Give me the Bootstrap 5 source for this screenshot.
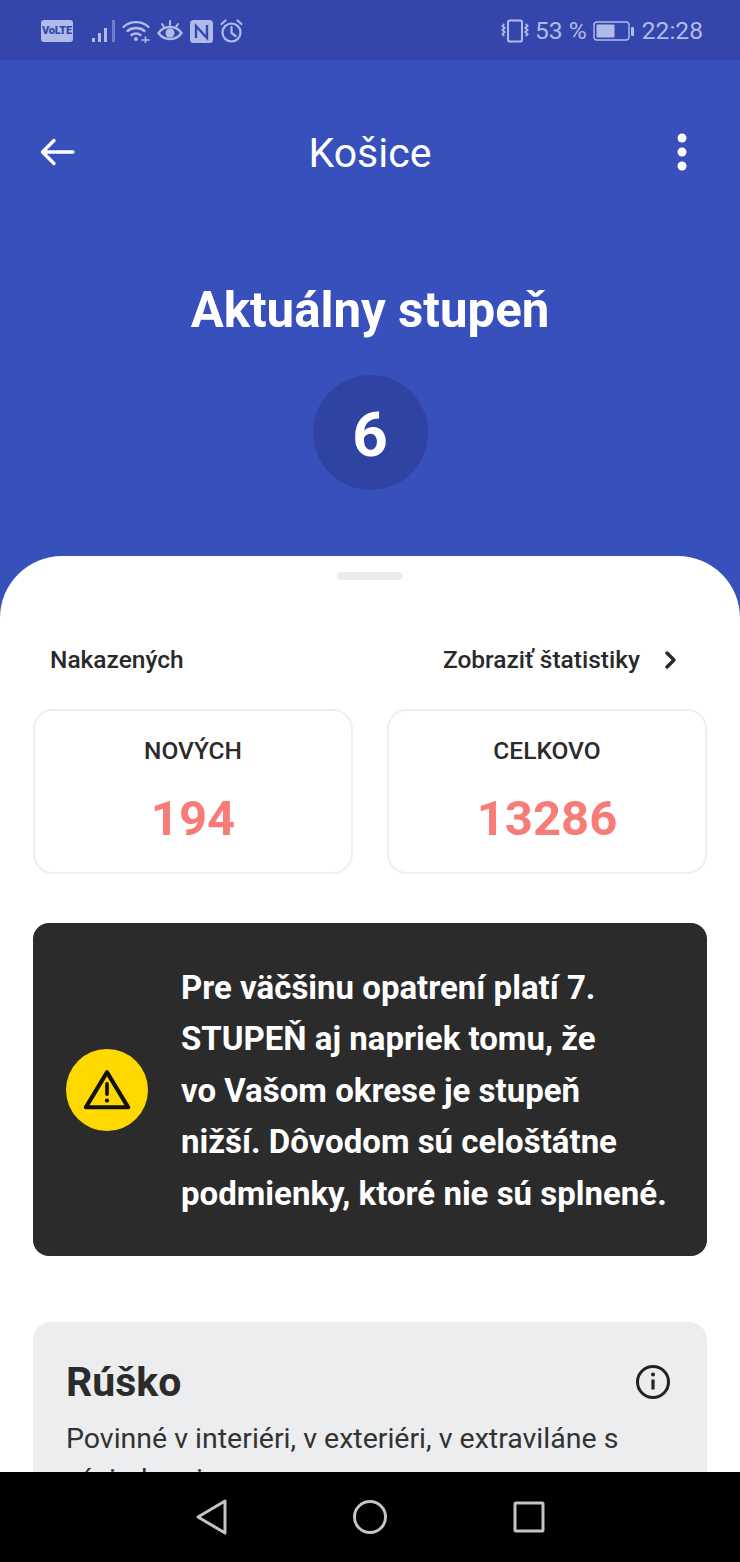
<!DOCTYPE html>
<html lang="sk">
<head>
  <meta charset="UTF-8">
  <title>Košice</title>
  <link href="https://cdn.jsdelivr.net/npm/bootstrap@5.3.3/dist/css/bootstrap.min.css" rel="stylesheet">
  <style>
    html, body { height: 1562px; overflow: hidden; }
    body { font-family: Roboto, "Liberation Sans", sans-serif; background: #000; color: #212121; }
    .screen { height: 1472px; overflow: hidden; background: #3850bc; }
    .status-bar { height: 60px; background: #3446ab; color: #b1bbea; padding: 2px 37px 0 41px; font-size: 24.6px; }
    .signal-icon { margin: 0 5px 0 19px; }
    .status-icons { gap: 7px; }
    .volte-badge { width: 32px; height: 22px; border-radius: 3px; background: #b1bbea; color: #3446ab; font-size: 11px; font-weight: 900; line-height: 22px; text-align: center; letter-spacing: -0.2px; }
    .pct-text { margin: 0 6px 0 6px; }
    .head-side { width: 60px; }
    .app-head { height: 184px; padding: 0 40px; color: #fff; }
    .arrow-icon { margin-top: 77px; }
    .kebab-icon { margin: 73px 13px 0 0; }
    .app-title { font-size: 41px; font-weight: 400; line-height: 46px; margin: 70px 0 0; }
    .hero { height: 312px; color: #fff; }
    .hero-title { font-size: 49.200px; font-weight: 700; line-height: 56px; margin: 38px 0 37px; }
    .level-circle { width: 115px; height: 115px; border-radius: 50%; background: #2f43a3; font-size: 62px; font-weight: 700; padding-top: 3px; }
    .sheet { background: #fff; border-radius: 62px 62px 0 0; padding: 0 33px; height: 916px; }
    .grab { width: 66px; height: 8px; border-radius: 4px; background: #ebebeb; margin: 0 auto; position: relative; top: 16px; }
    .stat-head { padding: 80px 29px 0 17px; font-size: 24.500px; font-weight: 500; line-height: 32px; color: #292929; }
    .stat-row { gap: 34px; margin-top: 33px; }
    .stat-box { flex: 1 1 0; height: 165px; border: 2px solid #efefef; border-radius: 20px; }
    .stat-label { font-size: 24.500px; font-weight: 500; line-height: 30px; color: #2b2b2b; margin-top: 25px; }
    .stat-num { font-size: 49px; font-weight: 700; line-height: 60px; color: #f77c78; margin-top: 23px; }
    .warn-box { background: #2b2b2b; border-radius: 16px; height: 333px; margin-top: 49px; padding: 0 33px; color: #fff; gap: 33px; }
    .warn-icon { width: 82px; height: 82px; border-radius: 50%; background: #ffd800; flex: none; }
    .warn-text { font-size: 33px; font-weight: 700; line-height: 51.400px; margin: 2px 0 0; white-space: nowrap; }
    .info-box { background: #ecedee; border-radius: 18px; height: 300px; margin-top: 66px; padding: 34px 36px 34px 33px; }
    .info-title { font-size: 41px; font-weight: 700; line-height: 52px; margin: 0; color: #2b2b2b; }
    .info-text { font-size: 28.500px; line-height: 41px; margin: 10px 0 0; color: #333; width: 570px; }
    .nav-keys { height: 90px; background: #000; }
    .key-home { margin: 0 125px 0 124px; }
  </style>
</head>
<body>
  <div class="screen">
    <!-- status bar -->
    <div class="status-bar d-flex align-items-center justify-content-between">
      <div class="d-flex align-items-center">
        <div class="volte-badge">VoLTE</div>
        <svg class="signal-icon" width="25" height="24" viewBox="0 0 25 24"><rect x="0" y="19" width="3" height="4" fill="#b1bbea"/><rect x="6" y="14" width="3" height="9" fill="#b1bbea"/><rect x="12" y="9" width="3" height="14" fill="#b1bbea"/><rect x="20" y="1" width="3" height="22" fill="#6f7dcb"/></svg>
        <div class="status-icons d-flex align-items-center">
          <svg width="28" height="24" viewBox="0 0 28 24" fill="none" stroke="#b1bbea" stroke-width="2.400" stroke-linecap="round"><path d="M1.500 8C8 1.500 20 1.500 26.500 8"/><path d="M5.500 12C10 8 18 8 22.500 12"/><path d="M9.500 16C12 14 16 14 18.500 16"/><circle cx="14" cy="20" r="2" fill="#b1bbea" stroke="none"/><path d="M20 21h7M23.500 18v6" stroke-width="1.600"/></svg>
          <svg width="26" height="24" viewBox="0 0 26 24" fill="none" stroke="#b1bbea" stroke-width="2.400" stroke-linecap="round"><path d="M1.500 14C7 6 19 6 24.500 14C19 22 7 22 1.500 14Z"/><circle cx="13" cy="14" r="4.500" fill="#b1bbea" stroke="none"/><path d="M5 5l2 3M13 2v4M21 5l-2 3" stroke-width="2"/></svg>
          <svg width="23" height="23" viewBox="0 0 23 23"><rect width="23" height="23" rx="3.500" fill="#b1bbea"/><path d="M6 18V6l11 12V5" fill="none" stroke="#3446ab" stroke-width="2.400"/></svg>
          <svg width="23" height="24" viewBox="0 0 23 24" fill="none" stroke="#b1bbea" stroke-width="2.200" stroke-linecap="round"><circle cx="11.500" cy="13.500" r="9"/><path d="M11.500 8v6l4 3M1.500 5l4-3.500M21.500 5l-4-3.500"/></svg>
        </div>
      </div>
      <div class="d-flex align-items-center">
        <svg width="28" height="24" viewBox="0 0 30 24" preserveAspectRatio="none" fill="none" stroke="#b1bbea" stroke-width="2.200"><rect x="7.500" y="1.500" width="15" height="21" rx="2"/><path d="M3.500 5l-2 2l2.500 2l-2.500 2l2.500 2l-2.500 2l2 2M26.500 5l2 2l-2.500 2l2.500 2l-2.500 2l2.500 2l-2 2" stroke-width="1.800"/></svg>
        <span class="pct-text">53 %</span>
        <svg width="41" height="20" viewBox="0 0 41 20" fill="none"><rect x="1" y="1" width="35" height="18" rx="3" stroke="#b1bbea" stroke-width="1.400"/><rect x="3.500" y="3.500" width="18" height="13" rx="1" fill="#b1bbea"/><rect x="38" y="6" width="3" height="9" rx="1" fill="#b1bbea"/></svg>
        <span class="ms-2">22:28</span>
      </div>
    </div>

    <!-- toolbar -->
    <div class="app-head d-flex align-items-start justify-content-between">
      <div class="head-side">
        <svg class="arrow-icon" width="36" height="30" viewBox="0 0 36 30" fill="none" stroke="#fff" stroke-width="3.400" stroke-linecap="round" stroke-linejoin="round"><path d="M33 15H3M14 3.500L2.500 15L14 26.500"/></svg>
      </div>
      <h1 class="app-title">Košice</h1>
      <div class="head-side text-end">
        <svg class="kebab-icon" width="10" height="38" viewBox="0 0 10 38" fill="#fff"><circle cx="5" cy="5" r="4.500"/><circle cx="5" cy="19" r="4.500"/><circle cx="5" cy="33" r="4.500"/></svg>
      </div>
    </div>

    <!-- current level -->
    <div class="hero d-flex flex-column align-items-center">
      <h2 class="hero-title">Aktuálny stupeň</h2>
      <div class="level-circle d-flex align-items-center justify-content-center">6</div>
    </div>

    <!-- bottom sheet -->
    <div class="sheet">
      <div class="grab"></div>
      <div class="stat-head d-flex justify-content-between align-items-center">
        <span>Nakazených</span>
        <span class="d-flex align-items-center">Zobraziť štatistiky
          <svg class="ms-4" width="14" height="18" viewBox="0 0 14 18" fill="none" stroke="#292929" stroke-width="3.400" stroke-linecap="round" stroke-linejoin="round"><path d="M3 2l7 7l-7 7"/></svg>
        </span>
      </div>
      <div class="stat-row d-flex">
        <div class="stat-box text-center">
          <div class="stat-label">NOVÝCH</div>
          <div class="stat-num">194</div>
        </div>
        <div class="stat-box text-center">
          <div class="stat-label">CELKOVO</div>
          <div class="stat-num">13286</div>
        </div>
      </div>

      <div class="warn-box d-flex align-items-center">
        <div class="warn-icon d-flex align-items-center justify-content-center">
          <svg width="48" height="43" viewBox="0 0 50 44" fill="none" stroke="#111" stroke-width="4.400" stroke-linejoin="round" stroke-linecap="round"><path d="M25 4L47 40.500H3Z"/><path d="M25 16v11" stroke-width="3.800"/><circle cx="25" cy="33.500" r="2.200" fill="#111" stroke="none"/></svg>
        </div>
        <p class="warn-text">Pre väčšinu opatrení platí 7.<br>STUPEŇ aj napriek tomu, že<br>vo Vašom okrese je stupeň<br>nižší. Dôvodom sú celoštátne<br>podmienky, ktoré nie sú splnené.</p>
      </div>

      <div class="info-box">
        <div class="d-flex justify-content-between align-items-center">
          <h3 class="info-title">Rúško</h3>
          <svg width="36" height="36" viewBox="0 0 36 36" fill="none" stroke="#222" stroke-width="3"><circle cx="18" cy="18" r="15.500"/><path d="M18 15.500v10" stroke-width="3.200"/><circle cx="18" cy="10.500" r="2" fill="#222" stroke="none"/></svg>
        </div>
        <p class="info-text">Povinné v interiéri, v exteriéri, v extraviláne s výnimkami</p>
      </div>
    </div>
  </div>

  <!-- android keys -->
  <div class="nav-keys d-flex align-items-center justify-content-center">
    <svg width="32" height="36" viewBox="0 0 32 36" fill="none" stroke="#c4c4c4" stroke-width="3" stroke-linejoin="round"><path d="M29 2V34L2 18Z"/></svg>
    <svg class="key-home" width="36" height="36" viewBox="0 0 36 36" fill="none" stroke="#c4c4c4" stroke-width="3"><circle cx="18" cy="18" r="15.500"/></svg>
    <svg width="32" height="32" viewBox="0 0 32 32" fill="none" stroke="#c4c4c4" stroke-width="3" stroke-linejoin="round"><rect x="2" y="2" width="28" height="28" rx="1"/></svg>
  </div>

  <script src="https://cdn.jsdelivr.net/npm/bootstrap@5.3.3/dist/js/bootstrap.bundle.min.js"></script>
</body>
</html>
